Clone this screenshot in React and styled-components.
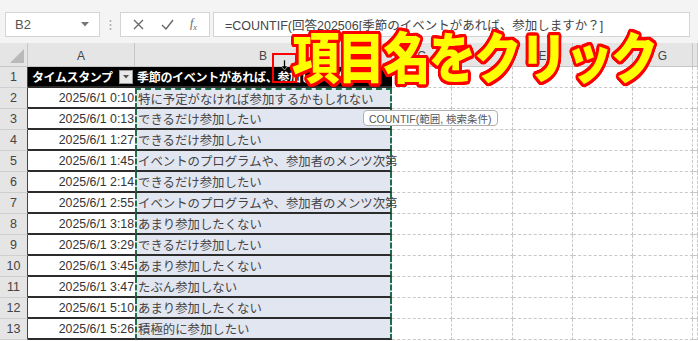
import React from 'react';
import styled, { createGlobalStyle, css } from 'styled-components';

const GlobalStyle = createGlobalStyle`
  html, body {
    margin: 0;
    padding: 0;
    background: #ffffff;
    overflow: hidden;
  }
  body {
    font-family: "Liberation Sans", "Noto Sans CJK JP", sans-serif;
  }
`;

const FONT = `"Liberation Sans", "Noto Sans CJK JP", sans-serif`;

const ring = (() => {
  const out = [];
  for (let r = 1; r <= 3.5; r += 0.75) {
    for (let a = 0; a < 20; a++) {
      const t = (a / 20) * Math.PI * 2;
      out.push(`${(Math.cos(t) * r).toFixed(2)}px ${(Math.sin(t) * r).toFixed(2)}px 0 #ff0000`);
    }
  }
  return out.join(', ');
})();

const Page = styled.div`
  position: relative;
  width: 698px;
  height: 341px;
  background: #fff;
  overflow: hidden;
`;

const FormulaRow = styled.div`
  height: 43px;
  box-sizing: border-box;
  padding: 12px 8px 6px 5px;
  display: flex;
  align-items: stretch;
  background: #f4f4f4;
`;

const NameBox = styled.div`
  width: 95px;
  box-sizing: border-box;
  background: #fff;
  border: 1px solid #d4d4d4;
  display: flex;
  align-items: center;
  justify-content: space-between;
  padding: 0 10px 0 9px;
  font-size: 13px;
  color: #555;
`;

const Grip = styled.div`
  width: 20px;
  display: flex;
  align-items: center;
  justify-content: center;
`;

const ToolBox = styled.div`
  width: 90px;
  box-sizing: border-box;
  background: #fff;
  border: 1px solid #d4d4d4;
  display: flex;
  align-items: center;
  justify-content: space-around;
  padding: 0 4px;
  margin-right: 3px;
`;

const Fx = styled.span`
  font-family: "Liberation Serif", serif;
  font-style: italic;
  font-size: 12px;
  color: #666;
  sub { font-size: 8px; }
`;

const FormulaInput = styled.div`
  flex: 1;
  background: #fff;
  border: 1px solid #d4d4d4;
  display: flex;
  align-items: center;
  padding-left: 11px;
  font-size: 12.5px;
  color: #444;
  white-space: nowrap;
  overflow: hidden;
`;

const Sheet = styled.div`
  display: grid;
  grid-template-columns: 28px 107px 257px 60px 61px 60px 60px 60px 1fr;
  grid-template-rows: 24px repeat(13, 21px);
`;

const headBg = css`
  background: #e5e5e5;
  color: #444;
  font-size: 12px;
  display: flex;
  align-items: center;
  justify-content: center;
  box-sizing: border-box;
`;

const Corner = styled.div`
  ${headBg};
  position: relative;
  border-right: 1px solid #c6c6c6;
  border-bottom: 1px solid #c6c6c6;
`;

const ColHead = styled.div`
  ${headBg};
  border-right: 1px solid #c6c6c6;
  border-bottom: 1px solid #c6c6c6;
  padding-top: 2px;
`;

const RowHead = styled.div`
  ${headBg};
  border-bottom: 1px solid #cfcfcf;
  border-right: 1px solid #444;
  font-size: 12.5px;
`;

const ACell = styled.div`
  box-sizing: border-box;
  display: flex;
  align-items: center;
  white-space: nowrap;
  overflow: hidden;
  border-bottom: 2px solid #2c2c2c;
  font-family: ${FONT};
  ${p => p.$head ? css`
    background: #000;
    color: #fff;
    font-weight: 700;
    font-size: 12px;
    justify-content: space-between;
    padding: 0 2px 0 4px;
    letter-spacing: -0.4px;
  ` : css`
    background: #fff;
    color: #333;
    font-size: 12.3px;
    justify-content: flex-end;
    padding-right: 1px;
  `}
`;

const BCell = styled.div`
  box-sizing: border-box;
  display: flex;
  align-items: center;
  white-space: nowrap;
  border-bottom: 2px solid #2c2c2c;
  font-family: ${FONT};
  position: relative;
  ${p => p.$head ? css`
    background: #000;
    color: #fff;
    font-weight: 700;
    font-size: 12px;
    padding-left: 2px;
    letter-spacing: -0.3px;
    overflow: hidden;
  ` : css`
    background: #e2e6f1;
    color: #444;
    font-size: 12.4px;
    padding-left: 1px;
    border-left: 2px dashed #1f6e4a;
    border-right: 2px dashed #1f6e4a;
    z-index: 1;
    ${p.$first && css`border-top: 2px dashed #1f6e4a;`}
  `}
`;

const Empty = styled.div`
  box-sizing: border-box;
  border-right: 1px dashed #c8c8c8;
  border-bottom: 1px dashed #c8c8c8;
`;

const Filter = styled.span`
  width: 12px;
  height: 12px;
  background: #e9e9e9;
  border: 1px solid #9a9a9a;
  display: flex;
  align-items: center;
  justify-content: center;
  flex-shrink: 0;
`;

const Callout = styled.div`
  position: absolute;
  left: 292px;
  top: 27px;
  font-family: "Noto Sans CJK JP", sans-serif;
  font-weight: 900;
  font-size: 55px;
  line-height: 1;
  letter-spacing: -2px;
  color: #ffff00;
  text-shadow: ${ring};
  white-space: nowrap;
  transform: scaleX(0.86);
  transform-origin: left top;
  z-index: 3;
`;

const ClickBox = styled.div`
  position: absolute;
  left: 272px;
  top: 53px;
  width: 21px;
  height: 21px;
  border: 2px solid #ff0000;
  display: flex;
  justify-content: center;
  padding-top: 5px;
  box-sizing: content-box;
  z-index: 2;
`;

const Tip = styled.div`
  position: absolute;
  left: 363px;
  top: 110px;
  height: 14px;
  padding: 0 5px;
  background: #fff;
  border: 1px solid #b0b0b0;
  border-radius: 4px;
  font-size: 10.5px;
  color: #555;
  display: flex;
  align-items: center;
  white-space: nowrap;
  z-index: 2;
`;

const rows = [
  ['2025/6/1 0:10', '特に予定がなければ参加するかもしれない'],
  ['2025/6/1 0:13', 'できるだけ参加したい'],
  ['2025/6/1 1:27', 'できるだけ参加したい'],
  ['2025/6/1 1:45', 'イベントのプログラムや、参加者のメンツ次第'],
  ['2025/6/1 2:14', 'できるだけ参加したい'],
  ['2025/6/1 2:55', 'イベントのプログラムや、参加者のメンツ次第'],
  ['2025/6/1 3:18', 'あまり参加したくない'],
  ['2025/6/1 3:29', 'できるだけ参加したい'],
  ['2025/6/1 3:45', 'あまり参加したくない'],
  ['2025/6/1 3:47', 'たぶん参加しない'],
  ['2025/6/1 5:10', 'あまり参加したくない'],
  ['2025/6/1 5:26', '積極的に参加したい'],
];

const cols = ['A', 'B', 'C', 'D', 'E', 'F', 'G', ''];

const Fillers = () => (
  <>
    {[0, 1, 2, 3, 4, 5].map(i => <Empty key={i} />)}
  </>
);

export default function App() {
  return (
    <Page>
      <GlobalStyle />
      <FormulaRow>
        <NameBox>
          <span>B2</span>
          <svg width="8" height="5" viewBox="0 0 8 5"><path d="M0 0h8L4 4.5z" fill="#777" /></svg>
        </NameBox>
        <Grip>
          <svg width="3" height="12" viewBox="0 0 3 12">
            <circle cx="1.5" cy="2" r="1" fill="#aaa" />
            <circle cx="1.5" cy="6" r="1" fill="#aaa" />
            <circle cx="1.5" cy="10" r="1" fill="#aaa" />
          </svg>
        </Grip>
        <ToolBox>
          <svg width="11" height="11" viewBox="0 0 11 11"><path d="M1 1l9 9M10 1l-9 9" stroke="#666" strokeWidth="1.3" /></svg>
          <svg width="13" height="11" viewBox="0 0 13 11"><path d="M1 6l4 4 7-9" stroke="#666" strokeWidth="1.4" fill="none" /></svg>
          <Fx>f<sub>x</sub></Fx>
        </ToolBox>
        <FormulaInput>=COUNTIF(回答202506[季節のイベントがあれば、参加しますか？]</FormulaInput>
      </FormulaRow>

      <Sheet>
        <Corner>
          <svg width="14" height="14" viewBox="0 0 14 14" style={{ position: 'absolute', right: 3, bottom: 3 }}>
            <path d="M14 0v14H0z" fill="#b9b9b9" />
          </svg>
        </Corner>
        {cols.map((c, i) => <ColHead key={i}>{c}</ColHead>)}

        <RowHead>1</RowHead>
        <ACell $head>
          <span>タイムスタンプ</span>
          <Filter>
            <svg width="6" height="4" viewBox="0 0 6 4"><path d="M0 0h6L3 3.5z" fill="#555" /></svg>
          </Filter>
        </ACell>
        <BCell $head>季節のイベントがあれば、参加しますか？</BCell>
        <Fillers />

        {rows.map(([t, a], i) => (
          <React.Fragment key={i}>
            <RowHead>{i + 2}</RowHead>
            <ACell>{t}</ACell>
            <BCell $first={i === 0}>{a}</BCell>
            <Fillers />
          </React.Fragment>
        ))}
      </Sheet>

      <ClickBox>
        <svg width="7" height="10" viewBox="0 0 7 10"><path d="M2.5 0h2v6h2.5L3.5 10 0 6h2.5z" fill="#000" stroke="#fff" strokeWidth="0.6" /></svg>
      </ClickBox>
      <Callout>項目名をクリック</Callout>
      <Tip>COUNTIF(範囲, 検索条件)</Tip>
    </Page>
  );
}
